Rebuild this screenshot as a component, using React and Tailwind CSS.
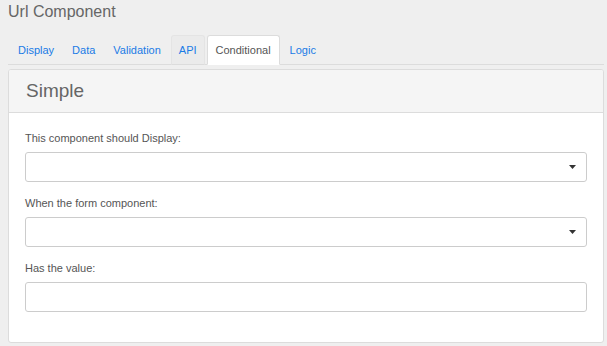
import React from 'react';

const tabs = ['Display', 'Data', 'Validation', 'API', 'Conditional', 'Logic'];

function Caret() {
  return (
    <svg width="7" height="4" viewBox="0 0 7 4" className="block">
      <polygon points="0,0 7,0 3.5,4" fill="#333" />
    </svg>
  );
}

function Tab({ label }) {
  // Conditional is the open tab, API shows the hover border
  if (label === 'Conditional') {
    return (
      <div className="h-[30px] -mb-px mr-[2px] px-[8px] flex items-center bg-white border border-[#dcdcdc] border-b-white rounded-t-[3px] text-[#555]">
        {label}
      </div>
    );
  }
  if (label === 'API') {
    return (
      <div className="h-[30px] -mb-px mr-[2px] px-[7px] flex items-center bg-[#ebebeb] border border-[#e4e4e4] border-b-[#dcdcdc] rounded-t-[3px] text-[#1a7be6]">
        {label}
      </div>
    );
  }
  return (
    <div className="h-[30px] -mb-px mr-[2px] px-[7px] flex items-center border border-transparent text-[#1a7be6]">
      {label}
    </div>
  );
}

function Field({ label, select, last }) {
  return (
    <div className={last ? '' : 'mb-[14px]'}>
      <div className="text-[11px] leading-[15px] text-[#555] mb-[6px]">{label}</div>
      <div className="h-[30px] bg-white border border-[#ccc] rounded-[3px] flex items-center justify-end pr-[10px]">
        {select && <Caret />}
      </div>
    </div>
  );
}

export default function App() {
  return (
    <div className="min-h-screen bg-[#efefef] font-['Liberation_Sans',Arial,sans-serif]">
      {/* Title */}
      <div className="h-[35px] pl-[8px] pt-[2px] text-[16px] leading-[20px] text-[#666]">
        Url Component
      </div>

      {/* Tabs */}
      <div className="ml-[8px] w-[596px] h-[30px] flex pl-[2px] border-b border-[#dcdcdc] text-[11px]">
        {tabs.map((t) => (
          <Tab key={t} label={t} />
        ))}
      </div>

      {/* Card */}
      <div className="mt-[4px] ml-[8px] w-[596px] bg-white border border-[#dcdcdc] rounded-[3px] overflow-hidden">
        <div className="h-[43px] bg-[#f5f5f5] border-b border-[#dcdcdc] px-[17px] flex items-center text-[19px] text-[#666]">
          Simple
        </div>
        <div className="pt-[18px] px-[16px] pb-[30px]">
          <Field label="This component should Display:" select />
          <Field label="When the form component:" select />
          <Field label="Has the value:" last />
        </div>
      </div>
    </div>
  );
}
